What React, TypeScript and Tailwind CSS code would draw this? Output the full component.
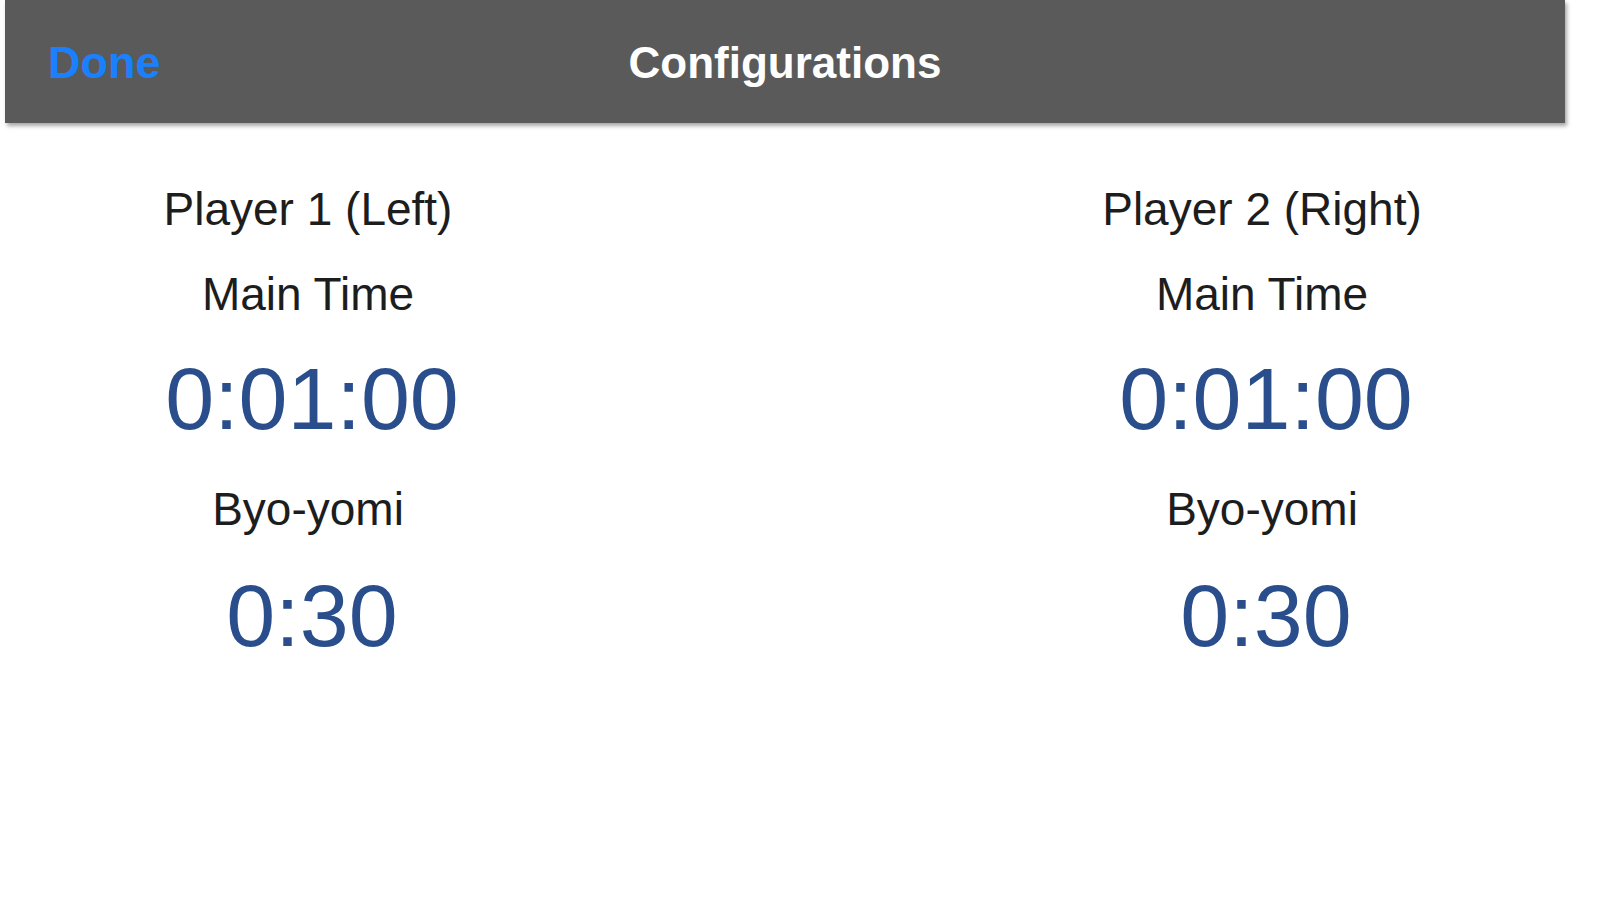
import React from "react";

const players = [
    { name: "Player 1 (Left)", mainTime: "0:01:00", byoyomi: "0:30" },
    { name: "Player 2 (Right)", mainTime: "0:01:00", byoyomi: "0:30" },
];

const PlayerColumn = ({ name, mainTime, byoyomi }: { name: string; mainTime: string; byoyomi: string }) => {
    return (
        <div className="w-[460px] flex flex-col items-center text-center">
            <div className="h-[46px] leading-[46px] text-[46px] text-[#1d1d1d]">{name}</div>
            <div className="mt-[39px] h-[46px] leading-[46px] text-[46px] text-[#1d1d1d]">Main Time</div>
            <div className="mt-[38px] h-[88px] leading-[88px] text-[88px] text-[#2a4e8c] pl-[8px]">{mainTime}</div>
            <div className="mt-[43px] h-[46px] leading-[46px] text-[46px] text-[#1d1d1d]">Byo-yomi</div>
            <div className="mt-[40px] h-[88px] leading-[88px] text-[88px] text-[#2a4e8c] pl-[8px]">{byoyomi}</div>
        </div>
    );
};

export default function App() {
    return (
        <div className="w-[1599px] h-[900px] bg-white overflow-hidden font-['Liberation_Sans',Arial,sans-serif]">
            <div className="ml-[5px] w-[1560px]">
                {/* Nav bar */}
                <div className="relative h-[123px] bg-[#5a5a5a] shadow-[2px_3px_4px_rgba(0,0,0,0.35)] flex items-center">
                    <button className="ml-[43px] mt-[2px] text-[45px] font-bold text-[#1a80fd] leading-none">Done</button>
                    <div className="absolute inset-x-0 top-0 h-full flex items-center justify-center pointer-events-none">
                        <span className="mt-[2px] text-[44px] font-bold text-white leading-none">Configurations</span>
                    </div>
                </div>

                {/* Players */}
                <div className="flex justify-between px-[73px] pt-[63px]">
                    {players.map((p) => (
                        <PlayerColumn key={p.name} {...p} />
                    ))}
                </div>
            </div>
        </div>
    );
}
